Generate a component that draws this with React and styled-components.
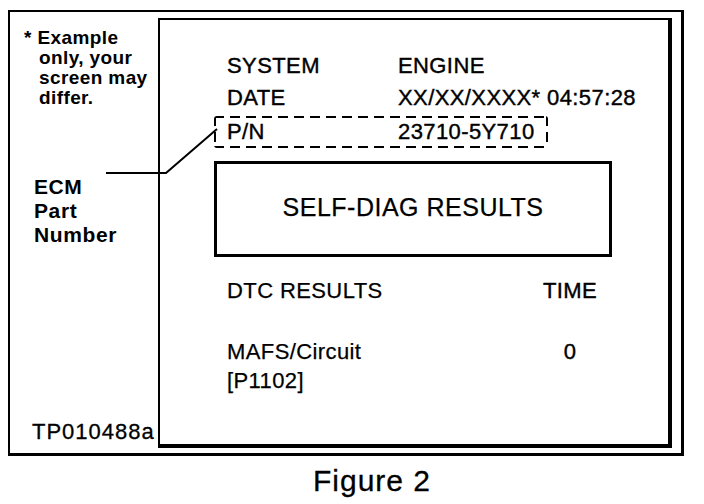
import styled, { createGlobalStyle } from "styled-components";

const GlobalStyle = createGlobalStyle`
	body {
		margin: 0;
		background: #fff;
		color: #000;
		font-family: "Liberation Sans", Arial, sans-serif;
	}
`;

const dash = (dir) =>
	`repeating-linear-gradient(${dir}, #000 0 10px, transparent 10px 16px)`;

export default function App() {
	return (
		<>
			<GlobalStyle />
			<Page>
				<Frame>
					<SideColumn>
						<Note>
							* Example
							<br />
							only, your
							<br />
							screen may
							<br />
							differ.
						</Note>
						<Callout>
							ECM
							<br />
							Part
							<br />
							Number
						</Callout>
						<Code>TP010488a</Code>
					</SideColumn>

					<Screen>
						<InfoRow>
							<span>SYSTEM</span>
							<span>ENGINE</span>
						</InfoRow>
						<InfoRow>
							<span>DATE</span>
							<span>XX/XX/XXXX* 04:57:28</span>
						</InfoRow>
						<PartBox>
							<span>P/N</span>
							<span>23710-5Y710</span>
						</PartBox>

						<TitleBox>SELF-DIAG RESULTS</TitleBox>

						<ResultRow $top={18}>
							<span>DTC RESULTS</span>
							<TimeCell>TIME</TimeCell>
						</ResultRow>
						<ResultRow $top={30} $lh={29}>
							<span>
								MAFS/Circuit
								<br />
								[P1102]
							</span>
							<TimeCell>0</TimeCell>
						</ResultRow>
					</Screen>

					{/* leader line from the label to the P/N box */}
					<Leader width="118" height="52" viewBox="0 0 118 52">
						<polyline
							points="2,47 62,47 113,3"
							fill="none"
							stroke="#000"
							strokeWidth="2"
						/>
					</Leader>
				</Frame>
				<Caption>Figure 2</Caption>
			</Page>
		</>
	);
}

const Page = styled.div`
	width: 704px;
	height: 504px;
	box-sizing: border-box;
	padding: 10px 0 0 8px;
	overflow: hidden;
`;

const Frame = styled.div`
	position: relative;
	display: flex;
	width: 676px;
	height: 446px;
	box-sizing: border-box;
	border: 2px solid #000;
	border-right-width: 3px;
	border-bottom-width: 3px;
	padding: 6px 9px 5px 0;
`;

const SideColumn = styled.div`
	width: 148px;
	flex-shrink: 0;
	display: flex;
	flex-direction: column;
	box-sizing: border-box;
	padding: 10px 0 4px 14px;
`;

const Note = styled.div`
	font-size: 19px;
	font-weight: 700;
	line-height: 20px;
	letter-spacing: 0.4px;
	padding-left: 15px;
	text-indent: -15px;
`;

const Callout = styled.div`
	margin-top: 67px;
	padding-left: 10px;
	font-size: 21px;
	font-weight: 700;
	line-height: 24px;
	letter-spacing: 0.6px;
`;

const Code = styled.div`
	margin-top: auto;
	padding-left: 8px;
	font-size: 22px;
	line-height: 24px;
	letter-spacing: 1px;
	-webkit-text-stroke: 0.3px #000;
`;

const Screen = styled.div`
	flex: 1;
	display: flex;
	flex-direction: column;
	align-items: flex-start;
	box-sizing: border-box;
	border: 2px solid #000;
	border-right-width: 4px;
	border-bottom-width: 4px;
	padding: 30px 0 0 54px;
	font-size: 22px;
	letter-spacing: 0.4px;
	-webkit-text-stroke: 0.25px #000;
`;

const InfoRow = styled.div`
	display: grid;
	grid-template-columns: 171px auto;
	padding-left: 13px;
	line-height: 32px;
	-webkit-text-stroke: 0.4px #000;
`;

const PartBox = styled(InfoRow)`
	margin-top: 2px;
	width: 334px;
	height: 32px;
	box-sizing: border-box;
	padding: 2px 2px 2px 13px;
	line-height: 28px;
	background:
		${dash("90deg")} top / 100% 2px no-repeat,
		${dash("90deg")} bottom / 100% 2px no-repeat,
		${dash("180deg")} left / 2px 100% no-repeat,
		${dash("180deg")} right / 2px 100% no-repeat;
	border-radius: 3px;
`;

const TitleBox = styled.div`
	margin-top: 13px;
	width: 398px;
	height: 96px;
	box-sizing: border-box;
	border: 3px solid #000;
	padding-bottom: 4px;
	display: flex;
	align-items: center;
	justify-content: center;
	font-size: 25px;
	letter-spacing: 0.5px;
`;

const ResultRow = styled.div`
	align-self: stretch;
	display: grid;
	grid-template-columns: 1fr 56px;
	margin-top: ${(p) => p.$top}px;
	padding: 0 70px 0 13px;
	line-height: ${(p) => p.$lh || 32}px;
`;

const TimeCell = styled.span`
	text-align: center;
	-webkit-text-stroke: 0.4px #000;
`;

const Leader = styled.svg`
	position: absolute;
	left: 94px;
	top: 114px;
`;

const Caption = styled.div`
	margin-top: 8px;
	padding-left: 305px;
	font-size: 30px;
	line-height: 34px;
	letter-spacing: 1px;
	-webkit-text-stroke: 0.3px #000;
`;
